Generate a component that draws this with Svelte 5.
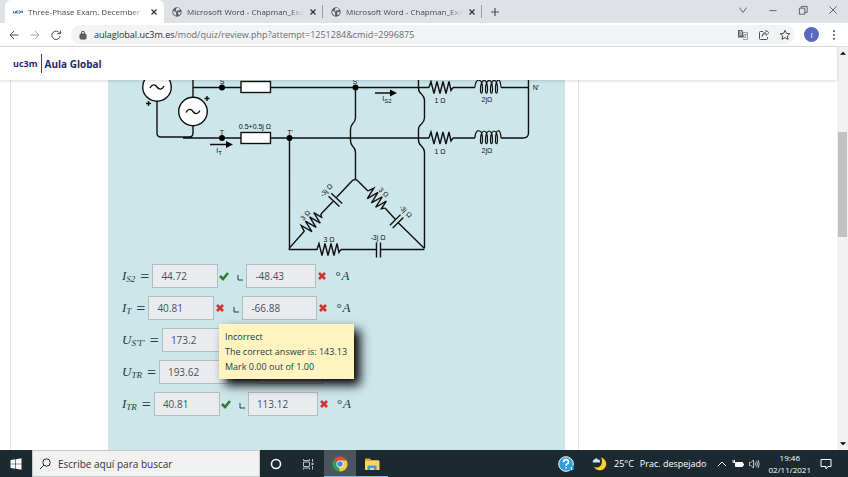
<script lang="ts">
    const tabs = [
        { title: "Three-Phase Exam. December 18", active: true },
        { title: "Microsoft Word - Chapman_Exan", active: false },
        { title: "Microsoft Word - Chapman_Exan", active: false },
    ];

    type Part = { value: string; width: number; correct?: boolean };
    type Row = { id: string; name: string; sub: string; unit?: string; parts: Part[] };

    const rows: Row[] = [
        {
            id: "is2",
            name: "I",
            sub: "S2",
            unit: "A",
            parts: [
                { value: "44.72", width: 66, correct: true },
                { value: "-48.43", width: 70 },
            ],
        },
        {
            id: "it",
            name: "I",
            sub: "T",
            unit: "A",
            parts: [
                { value: "40.81", width: 66 },
                { value: "-66.88", width: 75 },
            ],
        },
        {
            id: "ust",
            name: "U",
            sub: "S′T′",
            parts: [
                { value: "173.2", width: 66, correct: true },
                { value: "", width: 66 },
            ],
        },
        {
            id: "utr",
            name: "U",
            sub: "TR",
            parts: [
                { value: "193.62", width: 70, correct: true },
                { value: "", width: 66 },
            ],
        },
        {
            id: "itr",
            name: "I",
            sub: "TR",
            unit: "A",
            parts: [
                { value: "40.81", width: 66, correct: true },
                { value: "113.12", width: 70 },
            ],
        },
    ];
</script>

<div class="screen">
    <header class="tabs">
        {#each tabs as tab}
            <div class="tab" class:active={tab.active}>
                {#if tab.active}
                    <svg class="favicon" viewBox="0 0 10 10">
                        <path d="M0.500 4v2h2v-2M5 4H3.500v2H5M5.500 4h1.500v2H5.500M8 6V4h1.500v2" />
                    </svg>
                {:else}
                    <svg class="globe" viewBox="0 0 16 16">
                        <circle cx="8" cy="8" r="7.500" fill="#5a5f64" />
                        <path d="M2 6l3 1 2 2-1 2 1 3-3-1-2-4zM7 2l3-1 3 2-1 2-3 0-1 2-2-1zM10 8l4 0-1 4-2 1-1-2z" fill="#dee1e6" />
                    </svg>
                {/if}
                <span class="tab-title">{tab.title}</span>
                <button class="plain" aria-label="Close tab">
                    <svg class="close" viewBox="0 0 8 8"><path d="M1.500 1.500l5 5M6.500 1.500l-5 5" /></svg>
                </button>
            </div>
        {/each}
        <button class="plain new-tab" aria-label="New tab">
            <svg viewBox="0 0 10 10"><path d="M5 1v8M1 5h8" /></svg>
        </button>
        <div class="window-buttons">
            <button class="plain" aria-label="Search tabs">
                <svg viewBox="0 0 10 10"><path d="M2 3l3 4 3-4" /></svg>
            </button>
            <button class="plain" aria-label="Minimize">
                <svg viewBox="0 0 10 10"><path d="M2 5.500h6" /></svg>
            </button>
            <button class="plain" aria-label="Restore">
                <svg viewBox="0 0 10 10"><path d="M2 3.500h4.500v5H2zM3.500 3.500v-1.500h5v5h-2" /></svg>
            </button>
            <button class="plain" aria-label="Close">
                <svg viewBox="0 0 10 10"><path d="M2 2l6 6M8 2l-6 6" /></svg>
            </button>
        </div>
    </header>

    <nav class="toolbar">
        <button class="plain" aria-label="Back">
            <svg viewBox="0 0 12 12"><path d="M10.500 6H2M6 2L2 6l4 4" /></svg>
        </button>
        <button class="plain faded" aria-label="Forward">
            <svg viewBox="0 0 12 12"><path d="M1.500 6H10M6 2l4 4-4 4" /></svg>
        </button>
        <button class="plain" aria-label="Reload">
            <svg viewBox="0 0 12 12"><path d="M9.700 4.200A4.200 4.200 0 1 0 10.200 7M10.500 1.500v3.200H7.300" /></svg>
        </button>
        <div class="address">
            <svg class="lock" viewBox="0 0 8 10">
                <rect x="1" y="4" width="6" height="5" rx="1" fill="#5f6368" />
                <path d="M2.500 4V2.800a1.500 1.500 0 0 1 3 0V4" />
            </svg>
            <a href="#quiz"><span class="host">aulaglobal.uc3m.es</span>/mod/quiz/review.php?attempt=1251284&amp;cmid=2996875</a>
            <button class="plain" aria-label="Translate">
                <svg viewBox="0 0 12 12">
                    <path d="M5 3.500h5.500v7H6" stroke="#9a9ea3" />
                    <path d="M1 1h4.500l1.500 7.500H1z" fill="#5f6368" stroke="none" />
                    <path d="M2 3h3M3.500 2v1M4.500 3c0 2-1 3-2.500 3.500M2.500 4c.5 1 1.500 2 2.500 2.300" stroke="#fff" stroke-width="0.700" />
                    <path d="M7 5.500h3M8.500 5.500c0 2-.5 3-1.500 3.500M7.500 7l2 2" stroke="#777" stroke-width="0.700" />
                </svg>
            </button>
            <button class="plain" aria-label="Share">
                <svg viewBox="0 0 12 12">
                    <path d="M5 2.500H2.500q-1 0-1 1v6q0 1 1 1h6q1 0 1-1V8" />
                    <path d="M4 7.500q.5-3 4-3V6.500l3-2.800-3-2.400V3Q4 3.500 4 7.500z" stroke-width="0.800" />
                </svg>
            </button>
            <button class="plain" aria-label="Bookmark">
                <svg viewBox="0 0 12 12"><path d="M6 1.200l1.400 3.200 3.400.3-2.600 2.300.8 3.400L6 8.600l-3 1.800.8-3.400L1.200 4.700l3.400-.3z" /></svg>
            </button>
        </div>
        <button class="avatar" aria-label="Profile">I</button>
        <button class="plain menu" aria-label="Menu">
            <svg viewBox="0 0 12 12"><g fill="#5f6368" stroke="none"><circle cx="6" cy="2.200" r="1.100" /><circle cx="6" cy="6" r="1.100" /><circle cx="6" cy="9.800" r="1.100" /></g></svg>
        </button>
    </nav>

    <div class="viewport">
        <div class="page">
            <div class="site-header">
                <span class="logo">uc3m</span>
                <a class="site-name" href="#home">Aula Global</a>
            </div>
            <main>
                <section class="card">
                    <div class="question">
                        <svg class="circuit" viewBox="108 80 457 180">
                            <defs>
                                <path id="resistor" d="M-12 0l2-6 3 12 3-12 3 12 3-12 3 12 3-12 2 9 2-3" />
                                <path
                                    id="coil"
                                    stroke-width="1.200"
                                    d="M-13 0C-13-10-5-10-5.500 2C-5.500 7-7.500 7-7.500 2C-7.500-10 0-10-.5 2C-.5 7-2.500 7-2.500 2C-2.500-10 5-10 4.500 2C4.500 7 2.500 7 2.500 2C2.500-10 10-10 9.500 2C9.500 7 7.500 7 7.500 2C7.500-10 13-10 13 0"
                                />
                                <path id="capacitor" d="M-2-7V8M2-7V8" />
                            </defs>
                            <g class="wires">
                                <path d="M157 101v32q0 4 4 4h28q4 0 4-4v-8M183 138h58M193 80v17M193 87.500h48" />
                                <path d="M270 87.500h159M453 87.500h22M501 87.500h27.500M270 138h159M453 138h22M501 138h22q5.500 0 5.500-5V80" />
                                <path d="M355.500 87v31q0 3-3 6-2 2-2 6v10q0 4 2 6 3 3 3 6v27" />
                                <path d="M418.500 80v8q0 4 3 6 3 3 3 6v18q0 3-3 6-3 2-3 6v10q0 4 3 6 3 3 3 6v96" />
                                <path d="M289.500 138v110l15-17M321 214l12-12.500M336 198l15-16q4-5 8 0l9 9M385 208l10.500 11.500M398 222.500l26.500 26" />
                                <path d="M289.500 248v1.500h28M341 249.500h35.500M380.500 249.500h44" />
                                <path d="M210 144.500h18M375 93h17" />
                                <use href="#resistor" x="441" y="87.500" />
                                <use href="#resistor" x="441" y="138" />
                                <use href="#resistor" x="329" y="249.500" />
                                <use href="#resistor" transform="translate(312.500 222.500) rotate(-46)" />
                                <use href="#resistor" transform="translate(376.500 199.500) rotate(46)" />
                                <use href="#coil" x="488" y="87.500" />
                                <use href="#coil" x="488" y="138" />
                                <use href="#capacitor" x="378.500" y="249.500" />
                                <use href="#capacitor" transform="translate(335 199.500) rotate(-47)" />
                                <use href="#capacitor" transform="translate(397 221) rotate(45)" />
                                <g fill="#fff">
                                    <circle cx="157" cy="87" r="14.300" />
                                    <circle cx="193" cy="111.500" r="14.300" />
                                    <rect x="241" y="81.500" width="29.500" height="11" />
                                    <rect x="241" y="132.500" width="29.500" height="11" />
                                </g>
                                <path d="M150 88c2-4 5-4 7-1s5 3 7-1M186 112.500c2-4 5-4 7-1s5 3 7-1" />
                                <path d="M146 103.500h5M148.500 101v5M204.500 98.500h5M207 96v5" />
                            </g>
                            <circle cx="222" cy="87.500" r="3" />
                            <circle cx="222" cy="138" r="3" />
                            <circle cx="289.500" cy="138" r="3" />
                            <circle cx="355.500" cy="87.500" r="3" />
                            <path d="M226 141l7 3.500-7 3.500zM390 89.500l7 3.500-7 3.500z" />
                            <g class="labels">
                                <text x="222" y="84.500">S</text>
                                <text x="355.500" y="84.500">S'</text>
                                <text x="222" y="135">T</text>
                                <text x="290" y="135">T'</text>
                                <text x="255" y="129">0.5+0.5j Ω</text>
                                <text x="219" y="153">I<tspan dy="2" font-size="6">T</tspan></text>
                                <text x="387" y="101">I<tspan dy="2" font-size="6">S2</tspan></text>
                                <text x="536" y="90">N'</text>
                                <text x="440" y="103">1 Ω</text>
                                <text x="487" y="102">2jΩ</text>
                                <text x="440" y="154">1 Ω</text>
                                <text x="487" y="153">2jΩ</text>
                                <text x="329" y="242">3 Ω</text>
                                <text x="378" y="240">-3j Ω</text>
                                <text transform="translate(307 217) rotate(-46)">3 Ω</text>
                                <text transform="translate(328 192) rotate(-47)">-3j Ω</text>
                                <text transform="translate(382 194) rotate(43)">3 Ω</text>
                                <text transform="translate(404 213) rotate(45)">-3j Ω</text>
                            </g>
                        </svg>

                        <div class="answers">
                            {#each rows as row}
                                <div class="row">
                                    <label class="math" for={row.id}>{row.name}<sub>{row.sub}</sub><span class="equals">=</span></label>
                                    {#each row.parts as part, i}
                                        {#if i > 0}
                                            <svg class="angle" viewBox="0 0 6 6"><path d="M1 0v5h5" /></svg>
                                        {/if}
                                        <input
                                            id={i === 0 ? row.id : `${row.id}-angle`}
                                            style="width: {part.width}px"
                                            aria-label={i > 0 ? "Angle" : undefined}
                                            value={part.value}
                                            readonly
                                        />
                                        {#if part.correct}
                                            <svg class="mark" viewBox="0 0 10 10"><path d="M1 5l3 3 5-6" stroke="#2f7d32" /></svg>
                                        {:else}
                                            <svg class="mark" viewBox="0 0 10 10"><path d="M2 2l6 6M8 2L2 8" stroke="#d43232" /></svg>
                                        {/if}
                                    {/each}
                                    {#if row.unit}
                                        <span class="math unit"><span class="degree">°</span>{row.unit}</span>
                                    {/if}
                                </div>
                            {/each}
                            <div class="tooltip" role="tooltip">
                                Incorrect<br />The correct answer is: 143.13<br />Mark 0.00 out of 1.00
                            </div>
                        </div>
                    </div>
                </section>
            </main>
        </div>
        <div class="scrollbar">
            <svg viewBox="0 0 10 10"><path d="M2.500 6.500L5 4l2.500 2.500z" /></svg>
            <div class="thumb"></div>
            <svg viewBox="0 0 10 10"><path d="M2.500 3.500L5 6l2.500-2.500z" /></svg>
        </div>
    </div>

    <footer class="taskbar">
        <button class="task" aria-label="Start">
            <svg viewBox="0 0 12 12" fill="#fff"><path d="M0.500 2l4.700-.7v4.400H.5zM5.800 1.200l5.700-.9v5.400H5.800zM.5 6.300h4.700v4.400L.5 10zM5.800 6.300h5.700v5.400l-5.700-.9z" /></svg>
        </button>
        <div class="search">
            <svg viewBox="0 0 12 12" fill="none" stroke="#222"><circle cx="7.500" cy="4.500" r="3.700" /><path d="M4.800 7.200L1 11" /></svg>
            <input aria-label="Buscar" placeholder="Escribe aquí para buscar" />
        </div>
        <button class="task" aria-label="Cortana">
            <svg viewBox="0 0 12 12" fill="none" stroke="#fff" stroke-width="1.500"><circle cx="6" cy="6" r="4.500" /></svg>
        </button>
        <button class="task" aria-label="Task view">
            <svg viewBox="0 0 12 12" fill="none" stroke="#b8bfc1"><path d="M1.500 4h6v4.500h-6zM1.500 1v1.500h6V1M1.500 11.500V10h6v1.500M10.500 1v3M10.500 8v3.500" /><path d="M9.500 5h2v2h-2z" fill="#b8bfc1" stroke="none" /></svg>
        </button>
        <button class="task running current" aria-label="Chrome">
            <svg class="large" viewBox="0 0 16 16">
                <path d="M8 8L1.500 4.250A7.500 7.500 0 0 1 14.500 4.250z" fill="#dd4b3e" />
                <path d="M8 8l6.500-3.750A7.500 7.500 0 0 1 8 15.500z" fill="#f9cb3c" />
                <path d="M8 8v7.500A7.500 7.500 0 0 1 1.500 4.250z" fill="#2c9e57" />
                <path d="M8 4.500h6.700L11 9.500l-3 6L6.500 11z" fill="#f9cb3c" />
                <circle cx="8" cy="8" r="3.600" fill="#fff" />
                <circle cx="8" cy="8" r="2.800" fill="#4687f0" />
            </svg>
        </button>
        <button class="task running" aria-label="Explorer">
            <svg class="large" viewBox="0 0 16 16">
                <path d="M1 2.500h5l1 1.500h8v3H1z" fill="#e8a33d" />
                <path d="M1 5h14.500v9H1z" fill="#fcd364" />
                <path d="M3.500 14V9.500h9V14h-2.500v-2H6v2z" fill="#3d9be0" />
            </svg>
        </button>
        <div class="tray">
            <svg class="large" viewBox="0 0 16 16">
                <circle cx="8" cy="8" r="7.300" fill="#2b9fe0" stroke="#fff" />
                <path d="M5.500 6.300q0-2.600 2.500-2.600t2.500 2.300q0 1.500-2.300 2.500v1.300M8.200 11v1.500" fill="none" stroke="#fff" stroke-width="1.700" />
                <circle cx="13.300" cy="12" r="2.500" fill="#2b9fe0" /><path d="M13.300 11v3" stroke="#fff" />
            </svg>
            <span class="weather">
                <svg class="large" viewBox="0 0 16 16">
                    <path d="M9 1.500a6.500 6.500 0 1 1-7 9.500q6 1.500 7.500-3 1-3.500-.5-6.500z" fill="#fbd12f" />
                    <path d="M1 6.500q-1-2.500 1.500-3Q4 1 6 3.500q2.500 0 2 3z" fill="#c7e6f7" />
                </svg>
                <span>25°C</span>
                <span>Prac. despejado</span>
            </span>
            <span class="status">
                <svg viewBox="0 0 12 12"><path d="M2 8l4-4 4 4" /></svg>
                <svg viewBox="0 0 12 12"><path d="M3.500 4.500h7v4h-7z" fill="#fff" /><path d="M1 2v2.500h2M2.500 2v2M11.500 5.500v2" /></svg>
                <svg viewBox="0 0 12 12"><path d="M1.500 4.500h1.500L5.500 2v8L3 7.500H1.500zM7 4.500q1 1.500 0 3M8.500 3q2 3 0 6M10 2q2.500 4 0 8" stroke-width="0.700" /></svg>
            </span>
            <time>19:46<br />02/11/2021</time>
            <svg class="notes" viewBox="0 0 12 12"><path d="M1 1.500h10v7H8l-2 2.500V8.500H1z" /></svg>
        </div>
    </footer>
</div>

<style>
    :global(body) {
        margin: 0;
    }

    .screen {
        display: flex;
        flex-direction: column;
        height: 100vh;
        overflow: hidden;
        font-family: "Open Sans", "Noto Sans", sans-serif;
        font-size: 9px;
        color: #45494d;
        background: #fff;
    }

    svg {
        display: block;
        flex: none;
        width: 12px;
        height: 12px;
    }

    button {
        padding: 0;
        border: 0;
        font-family: inherit;
    }

    input {
        box-sizing: border-box;
        min-width: 0;
        font-family: inherit;
    }

    a {
        color: inherit;
        text-decoration: none;
    }

    .plain {
        background: none;
    }

    .plain svg,
    .lock {
        fill: none;
        stroke: #4c5054;
    }

    .tabs {
        display: flex;
        align-items: center;
        height: 23px;
        padding-left: 5px;
        background: #dee1e6;
    }

    .tab {
        display: flex;
        align-items: center;
        gap: 5px;
        box-sizing: border-box;
        width: 159px;
        height: 23px;
        padding: 0 6px 0 8px;
        font-size: 8px;
    }

    .tab.active {
        border-radius: 6px 6px 0 0;
        background: #fff;
    }

    .tab .close {
        stroke: #2c2f33;
        stroke-width: 1.2;
    }

    .tab:not(.active) {
        background: linear-gradient(#9a9ea3, #9a9ea3) right center / 1px 13px no-repeat;
    }

    .favicon {
        width: 10px;
        height: 10px;
        fill: none;
        stroke: #4f74b3;
    }

    .globe {
        width: 10px;
        height: 10px;
    }

    .tab-title {
        flex: 1;
        min-width: 0;
        white-space: nowrap;
        mask-image: linear-gradient(to right, #000 88%, transparent);
    }

    .close {
        width: 8px;
        height: 8px;
    }

    .new-tab {
        padding-left: 8px;
    }

    .new-tab svg {
        width: 10px;
        height: 10px;
        stroke-width: 1.2;
    }

    .window-buttons {
        display: flex;
        gap: 18px;
        margin: 0 9px 4px auto;
    }

    .window-buttons svg {
        stroke-width: 0.7;
    }

    .toolbar {
        display: flex;
        align-items: center;
        gap: 9px;
        height: 23px;
        padding: 0 8px;
        border-bottom: 1px solid #dcdfe2;
    }

    .faded {
        opacity: 0.5;
    }

    .address {
        display: flex;
        flex: 1;
        align-items: center;
        gap: 9px;
        height: 19px;
        padding: 0 4px 0 8px;
        border-radius: 10px;
        background: #f1f3f4;
        font-size: 9px;
    }

    .address a {
        flex: 1;
        white-space: nowrap;
        color: #6a6e72;
    }

    .address .host {
        color: #2c2f33;
    }

    .lock {
        width: 8px;
        height: 10px;
        margin-right: -2px;
    }

    .avatar {
        width: 15px;
        height: 15px;
        border-radius: 50%;
        background: #5b68c0;
        font-size: 8px;
        color: #fff;
    }

    .viewport {
        display: flex;
        flex: 1;
        min-height: 0;
    }

    .page {
        display: flex;
        flex: 1;
        flex-direction: column;
        min-width: 0;
    }

    .site-header {
        z-index: 1;
        display: flex;
        flex: none;
        align-items: center;
        height: 33px;
        padding-left: 13px;
        box-shadow: 0 1px 3px rgba(0, 0, 0, 0.15);
        color: #25296b;
    }

    .logo {
        padding-right: 3px;
        border-right: 1px solid #25408f;
        font-size: 9px;
        font-weight: bold;
        line-height: 19px;
        color: #1d2a87;
    }

    .site-name {
        padding-left: 3px;
        font-size: 10px;
        font-weight: bold;
    }

    main {
        display: flex;
        flex: 1;
        min-height: 0;
        padding-left: 10px;
    }

    .card {
        box-sizing: border-box;
        width: 68.8%;
        padding: 0 13px 0 97px;
        border: 1px solid #e3e6e8;
        border-width: 0 1px;
    }

    .question {
        height: 100%;
        background: #cde6ea;
    }

    .circuit {
        width: 100%;
        height: auto;
    }

    .wires {
        fill: none;
        stroke: #111;
        stroke-width: 1.4;
    }

    .labels {
        font-family: "Liberation Sans", Arial, sans-serif;
        font-size: 7px;
        text-anchor: middle;
        fill: #111;
    }

    .answers {
        position: relative;
        display: flex;
        flex-direction: column;
        gap: 8px;
        padding: 4px 0 0 14px;
    }

    .row {
        display: flex;
        align-items: center;
        height: 24px;
    }

    .row input {
        height: 24px;
        padding: 0 8px;
        border: 1px solid #b4bcc2;
        background: #e9ecef;
        font-size: 10px;
        color: #495057;
    }

    .math {
        font-family: "Liberation Serif", "Times New Roman", serif;
        font-size: 13px;
        font-style: italic;
        white-space: nowrap;
        color: #17404d;
    }

    .math sub {
        font-size: 9px;
        line-height: 0;
        vertical-align: -2px;
    }

    .equals {
        padding: 0 3px 0 5px;
        font-size: 16px;
        font-style: normal;
        line-height: 0;
        vertical-align: -2px;
    }

    .mark {
        width: 10px;
        height: 10px;
        margin-left: 1px;
        fill: none;
        stroke-width: 2.6;
    }

    .angle {
        width: 6px;
        height: 6px;
        margin: 4px 3px 0 8px;
        fill: none;
        stroke: #17404d;
    }

    .unit {
        margin-left: 8px;
    }

    .degree {
        padding-right: 1px;
        font-style: normal;
    }

    .tooltip {
        position: absolute;
        top: 64px;
        left: 111px;
        padding: 5px 7px 5px 6px;
        background: #fff3bf;
        box-shadow: 6px 6px 10px #000;
        font-size: 9px;
        line-height: 15px;
        white-space: nowrap;
        color: #17404d;
    }

    .scrollbar {
        display: flex;
        flex-direction: column;
        align-items: center;
        width: 11px;
        background: #f1f1f1;
    }

    .thumb {
        width: 9px;
        height: 26%;
        margin: 73px 0 auto;
        background: #c1c1c1;
    }

    .taskbar {
        display: flex;
        flex: none;
        height: 27px;
        background: #1b2a30;
        font-size: 9px;
        color: #fff;
    }

    .task {
        display: flex;
        align-items: center;
        justify-content: center;
        box-sizing: border-box;
        width: 32px;
        background: none;
    }

    .running {
        border: solid #76b9ed;
        border-width: 0 0 1px;
        padding-top: 1px;
    }

    .current {
        background: #4a565b;
    }

    .large {
        width: 16px;
        height: 16px;
    }

    .search {
        display: flex;
        align-items: center;
        gap: 7px;
        box-sizing: border-box;
        width: 228px;
        padding-left: 6px;
        border: 1px solid #c5c9ca;
        background: #f1f1f1;
    }

    .search input {
        flex: 1;
        padding: 0;
        border: 0;
        background: none;
        font-size: 10px;
    }

    .search input::placeholder {
        color: #333;
    }

    .tray {
        display: flex;
        align-items: center;
        gap: 9px;
        margin-left: auto;
        padding-right: 16px;
    }

    .tray svg:not(.large) {
        fill: none;
        stroke: #fff;
    }

    .weather {
        display: flex;
        align-items: center;
        gap: 6px;
        padding-left: 9px;
    }

    .status {
        display: flex;
        gap: 4px;
    }

    time {
        font-size: 8px;
        line-height: 12px;
        text-align: center;
    }
</style>
